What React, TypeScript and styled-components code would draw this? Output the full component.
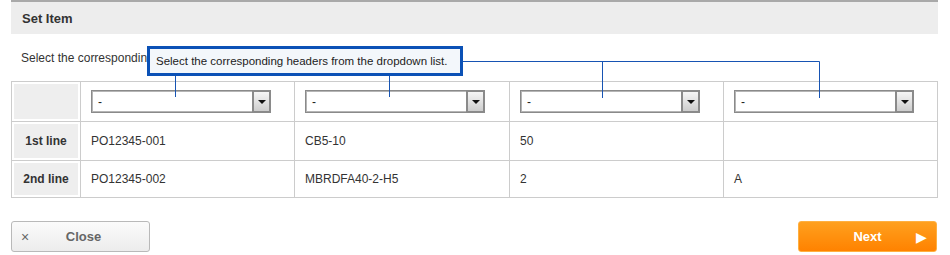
import React from "react";
import styled, { createGlobalStyle } from "styled-components";

const Global = createGlobalStyle`
  html, body { margin: 0; padding: 0; background: #fff; }
  body { font-family: "Liberation Sans", Arial, sans-serif; font-size: 12px; color: #333; }
`;

const Page = styled.div`
  position: relative;
  width: 950px;
  height: 255px;
  padding-left: 11px;
  box-sizing: border-box;
`;

const Header = styled.div`
  width: 927px;
  height: 34px;
  box-sizing: border-box;
  background: #ededed;
  border-top: 2px solid #a9a9a9;
  padding-left: 11px;
  display: flex;
  align-items: center;
  font-size: 13px;
  font-weight: bold;
  color: #333;
`;

const Intro = styled.p`
  margin: 0;
  padding: 17px 0 0 10px;
  height: 31px;
  box-sizing: border-box;
  line-height: 14px;
  color: #333;
`;

const Grid = styled.table`
  margin-top: 16px;
  border-collapse: collapse;
  table-layout: fixed;
  width: 927px;
  td, th { border: 1px solid #cccccc; padding: 0; }
`;

const Row = styled.tr<{ $h: number }>`
  height: ${(p) => p.$h}px;
`;

const Label = styled.th`
  width: 69px;
  font-weight: bold;
  color: #333;
  font-size: 12px;
`;

const LabelFill = styled.div<{ $h: number }>`
  margin: 2px;
  height: ${(p) => p.$h}px;
  background: #eeeeee;
  display: flex;
  align-items: center;
  justify-content: center;
`;

const Cell = styled.td`
  padding-left: 10px !important;
  color: #333;
`;

const Select = styled.div`
  width: 180px;
  height: 23px;
  box-sizing: border-box;
  border: 1px solid #8a8a8a;
  box-shadow: inset 0 0 0 1px #b5b5b5;
  background: #fff;
  display: flex;
  align-items: center;
  justify-content: space-between;
  color: #222;
`;

const SelectText = styled.span`
  padding-left: 6px;
`;

const Arrow = styled.span`
  width: 18px;
  height: 21px;
  box-sizing: border-box;
  border: 1px solid #8a8a8a;
  border-left-width: 2px;
  background: linear-gradient(#f6f6f6, #cdcdcd);
  display: flex;
  align-items: center;
  justify-content: center;
  &::after {
    content: "";
    border-left: 4px solid transparent;
    border-right: 4px solid transparent;
    border-top: 4px solid #111;
  }
`;

const Footer = styled.div`
  width: 926px;
  margin-top: 23px;
  display: flex;
  justify-content: space-between;
`;

const Btn = styled.button<{ $primary?: boolean }>`
  width: 139px;
  height: 31px;
  border-radius: 3px;
  font-family: "Liberation Sans", Arial, sans-serif;
  font-size: 13px;
  font-weight: bold;
  display: flex;
  align-items: center;
  justify-content: space-between;
  padding: 0 ${(p) => (p.$primary ? 8 : 0)}px 0 ${(p) => (p.$primary ? 8 : 6)}px;
  box-sizing: border-box;
  cursor: pointer;
  border: 1px solid ${(p) => (p.$primary ? "#ffb040" : "#b9b9b9")};
  background: ${(p) =>
    p.$primary ? "linear-gradient(#ffa01e, #ff8200)" : "linear-gradient(#fbfbfb, #ececec)"};
  color: ${(p) => (p.$primary ? "#fff" : "#666")};
`;

const BtnLabel = styled.span`
  flex: 1;
  text-align: center;
`;

const Icon = styled.span`
  width: 14px;
  font-weight: normal;
  font-size: 14px;
`;

const Tip = styled.div`
  position: absolute;
  left: 147px;
  top: 46px;
  width: 316px;
  height: 30px;
  box-sizing: border-box;
  border: 3px solid #0b51b6;
  background: #f3f7fb;
  font-size: 11.5px;
  color: #222;
  padding-left: 6px;
  display: flex;
  align-items: center;
  z-index: 2;
`;

const Wires = styled.svg`
  position: absolute;
  left: 0;
  top: 0;
  pointer-events: none;
  z-index: 1;
`;

const cols = ["", "", "", ""];
const rows = [
  { label: "1st line", vals: ["PO12345-001", "CB5-10", "50", ""], h: 38 },
  { label: "2nd line", vals: ["PO12345-002", "MBRDFA40-2-H5", "2", "A"], h: 36 },
];

export default function App() {
  return (
    <Page>
      <Global />
      <Header>Set Item</Header>
      <Intro>Select the corresponding headers from the dropdown list.</Intro>
      <Grid>
        <colgroup>
          <col style={{ width: 69 }} />
          <col style={{ width: 214 }} />
          <col style={{ width: 215 }} />
          <col style={{ width: 214 }} />
          <col style={{ width: 214 }} />
        </colgroup>
        <tbody>
          <Row $h={40}>
            <Label>
              <LabelFill $h={35} />
            </Label>
            {cols.map((_, i) => (
              <Cell key={i}>
                <Select>
                  <SelectText>-</SelectText>
                  <Arrow />
                </Select>
              </Cell>
            ))}
          </Row>
          {rows.map((r) => (
            <Row key={r.label} $h={r.h}>
              <Label>
                <LabelFill $h={r.h - 4}>{r.label}</LabelFill>
              </Label>
              {r.vals.map((v, i) => (
                <Cell key={i}>{v}</Cell>
              ))}
            </Row>
          ))}
        </tbody>
      </Grid>
      <Footer>
        <Btn>
          <Icon>×</Icon>
          <BtnLabel>Close</BtnLabel>
          <Icon />
        </Btn>
        <Btn $primary>
          <Icon />
          <BtnLabel>Next</BtnLabel>
          <Icon>▶</Icon>
        </Btn>
      </Footer>
      <Tip>Select the corresponding headers from the dropdown list.</Tip>
      <Wires width="950" height="255">
        <g stroke="#1754b3" strokeWidth="1" fill="none">
          <path d="M175.5 76V97" />
          <path d="M389.5 76V97" />
          <path d="M463 61.5H819.5V98" />
          <path d="M602.5 61.5V98" />
        </g>
      </Wires>
    </Page>
  );
}
